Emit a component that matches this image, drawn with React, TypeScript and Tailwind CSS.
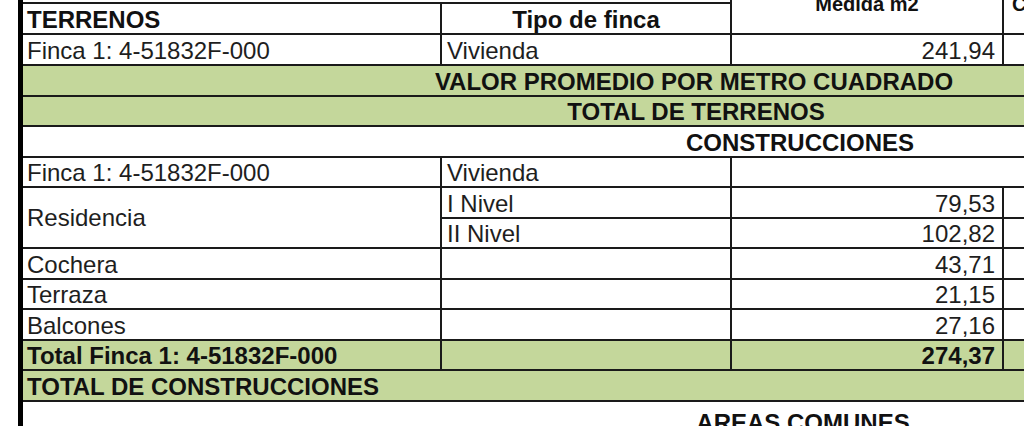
import React from "react";

const base = "flex leading-[26px] border-[#1a1a1a] overflow-hidden whitespace-nowrap";

function Cell({
  className = "",
  align = "items-end",
  children,
}: {
  className?: string;
  align?: string;
  children?: React.ReactNode;
}) {
  return <div className={`${base} ${align} ${className}`}>{children}</div>;
}

const rows: { label: string; tipo: string; value: string }[] = [
  { label: "Cochera", tipo: "", value: "43,71" },
  { label: "Terraza", tipo: "", value: "21,15" },
  { label: "Balcones", tipo: "", value: "27,16" },
];

export default function App() {
  return (
    <div className="h-[426px] w-[1024px] overflow-hidden bg-white flex font-['Liberation_Sans',Arial,sans-serif] text-[24px] text-[#1e1e1e]">
      <div className="w-[18px] shrink-0" />
      <div className="w-[5px] shrink-0 bg-black" />
      <div className="grid shrink-0 grid-cols-[419px_290px_272px_600px] grid-rows-[4px_31px_31px_31px_30px_31px_30px_31px_30px_31px_30px_31px_30px_31px_34px]">
        {/* header */}
        <Cell className="border-b-2" />
        <Cell className="border-b-2 border-r-2" />
        <Cell align="items-start" className="row-span-2 border-b-2 border-r-2 justify-center">
          <span className="-mt-[6px] text-[20px] leading-[20px] font-bold text-[#111]">Medida m2</span>
        </Cell>
        <Cell align="items-start" className="row-span-2 border-b-2 pl-[8px]">
          <span className="-mt-[6px] text-[20px] leading-[20px] font-bold text-[#111]">Costo por m2</span>
        </Cell>
        <Cell className="border-b-2 border-r-2 pl-[4px] font-bold text-[#111]">TERRENOS</Cell>
        <Cell className="border-b-2 border-r-2 justify-center font-bold text-[#111]">Tipo de finca</Cell>

        <Cell className="border-b-2 border-r-2 pl-[4px]">Finca 1: 4-51832F-000</Cell>
        <Cell className="border-b-2 border-r-2 pl-[5px]">Vivienda</Cell>
        <Cell className="border-b-2 border-r-2 justify-end pr-[7px]">241,94</Cell>
        <Cell className="border-b-2" />

        <Cell className="col-span-4 border-b-2 bg-[#c4d79b]">
          <div className="w-[1342px] shrink-0 text-center font-bold text-[#111]">VALOR PROMEDIO POR METRO CUADRADO</div>
        </Cell>
        <Cell className="col-span-4 border-b-2 bg-[#c4d79b]">
          <div className="w-[1346px] shrink-0 text-center font-bold text-[#111]">TOTAL DE TERRENOS</div>
        </Cell>
        <Cell className="col-span-4 border-b-2">
          <div className="w-[1554px] shrink-0 text-center font-bold text-[#111]">CONSTRUCCIONES</div>
        </Cell>

        <Cell className="border-b-2 border-r-2 pl-[4px]">Finca 1: 4-51832F-000</Cell>
        <Cell className="border-b-2 border-r-2 pl-[5px]">Vivienda</Cell>
        <Cell className="border-b-2" />
        <Cell className="border-b-2" />

        <Cell align="items-center" className="row-span-2 border-b-2 border-r-2 pl-[4px]">
          Residencia
        </Cell>
        <Cell className="border-b-2 border-r-2 pl-[5px]">I Nivel</Cell>
        <Cell className="border-b-2 border-r-2 justify-end pr-[7px]">79,53</Cell>
        <Cell className="border-b-2" />
        <Cell className="border-b-2 border-r-2 pl-[5px]">II Nivel</Cell>
        <Cell className="border-b-2 border-r-2 justify-end pr-[7px]">102,82</Cell>
        <Cell className="border-b-2" />

        {rows.map((r) => (
          <React.Fragment key={r.label}>
            <Cell className="border-b-2 border-r-2 pl-[4px]">{r.label}</Cell>
            <Cell className="border-b-2 border-r-2 pl-[5px]">{r.tipo}</Cell>
            <Cell className="border-b-2 border-r-2 justify-end pr-[7px]">{r.value}</Cell>
            <Cell className="border-b-2" />
          </React.Fragment>
        ))}

        <Cell className="border-b-2 border-r-2 pl-[4px] bg-[#c4d79b] font-bold text-[#111]">Total Finca 1: 4-51832F-000</Cell>
        <Cell className="border-b-2 border-r-2 bg-[#c4d79b]" />
        <Cell className="border-b-2 border-r-2 justify-end pr-[7px] bg-[#c4d79b] font-bold text-[#111]">274,37</Cell>
        <Cell className="border-b-2 bg-[#c4d79b]" />

        <Cell className="col-span-4 border-b-2 pl-[4px] bg-[#c4d79b] font-bold text-[#111]">TOTAL DE CONSTRUCCIONES</Cell>

        <Cell className="col-span-4">
          <div className="w-[1560px] shrink-0 text-center font-bold text-[#111]">AREAS COMUNES</div>
        </Cell>
      </div>
    </div>
  );
}
